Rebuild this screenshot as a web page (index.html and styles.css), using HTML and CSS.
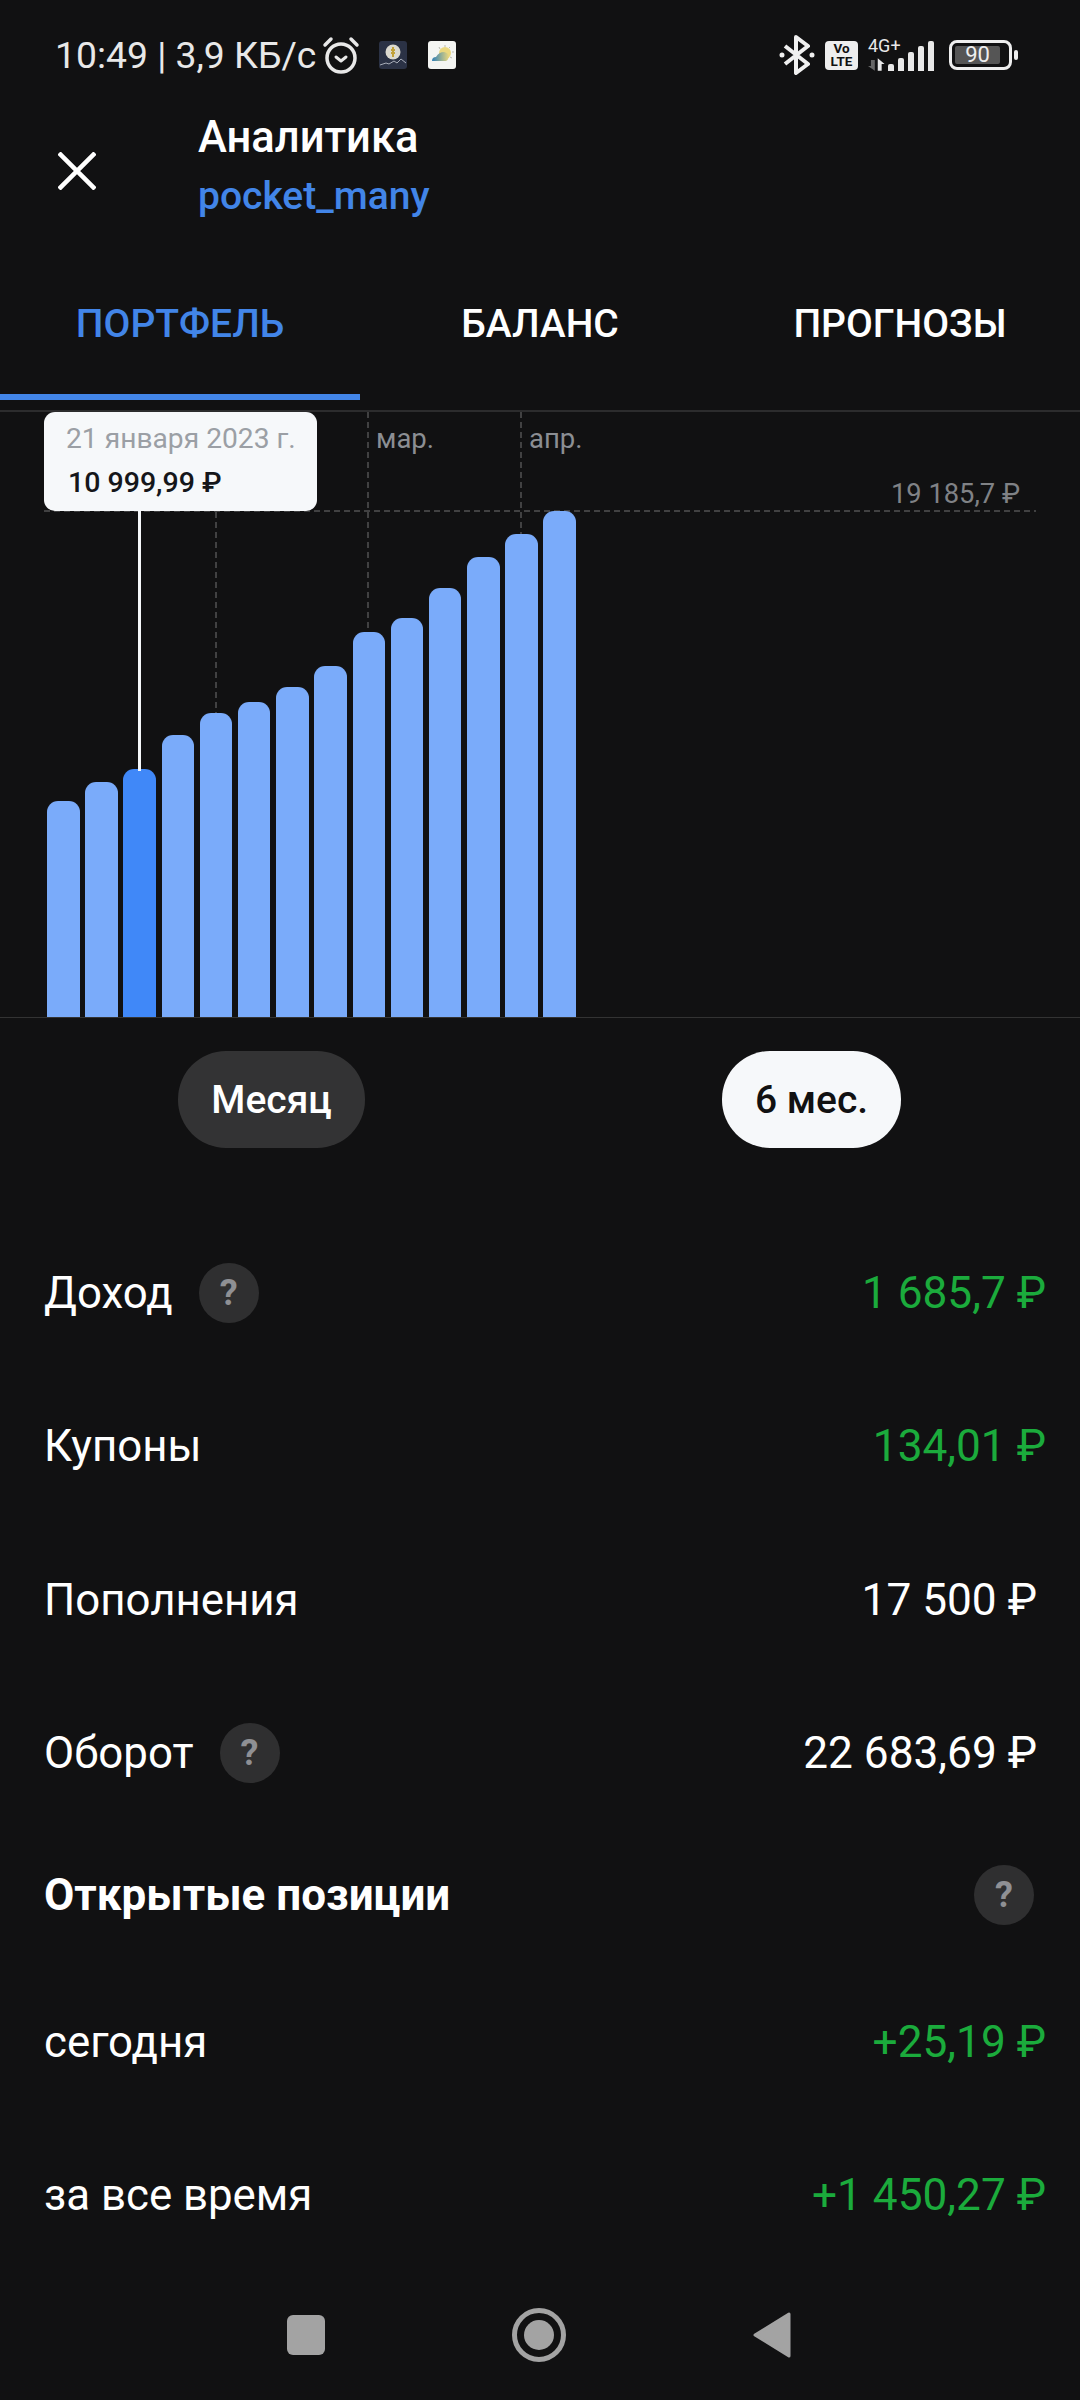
FILE: index.html
```html
<!DOCTYPE html>
<html lang="ru">
<head>
    <meta charset="UTF-8">
    <meta name="viewport" content="width=device-width, initial-scale=1.0">
    <title>Аналитика</title>
    <link rel="stylesheet" href="styles.css">
</head>
<body>
    <div class="status-bar">
        <div class="status-left">
            <span class="status-text">10:49 | 3,9 КБ/с</span>
            <svg class="alarm" width="40" height="38" viewBox="0 0 40 38" fill="none" stroke="#e8e8e8" stroke-linecap="round">
                <circle cx="20" cy="22" r="14" stroke-width="3.5"/>
                <path d="M15 21l5 4 5-4" stroke-width="3" stroke-linejoin="round"/>
                <path d="M4 9l6-6M36 9l-6-6" stroke-width="3.5"/>
            </svg>
            <svg class="app-icon app-icon-first" width="28" height="28" viewBox="0 0 28 28">
                <rect width="28" height="28" rx="3" fill="#2b3245"/>
                <circle cx="14" cy="11" r="7.5" fill="#dcdad0"/>
                <path d="M14 6v10M12 9h4M12 12h4" stroke="#c2a23a" stroke-width="2" fill="none"/>
                <path d="M1 24l6-2 3 1 5-3 3 2 4-4 5 4" fill="none" stroke="#a8adb8" stroke-width="1"/>
            </svg>
            <svg class="app-icon" width="28" height="28" viewBox="0 0 28 28">
                <defs>
                    <linearGradient id="cloud" x1="0" x2="1" y1="0" y2="0">
                        <stop offset="0" stop-color="#2f7fb5"/>
                        <stop offset="1" stop-color="#e9d77e"/>
                    </linearGradient>
                </defs>
                <rect width="28" height="28" rx="3" fill="#f4f5f2"/>
                <path d="M17 4v2M24 11h2M22 6l-1 1M24 17l-2-1M11 6l1 2" stroke="#b9b9b0" stroke-width="1" fill="none"/>
                <circle cx="17" cy="12" r="6" fill="#e9d77e"/>
                <path d="M4 20q0-4 4-4 3-5 8-5 5 1 5 5-1 3-3 4z" fill="url(#cloud)"/>
            </svg>
        </div>
        <div class="status-right">
            <svg width="36" height="40" viewBox="0 0 36 40" fill="none" stroke="#f0f0f0" stroke-width="4" stroke-linejoin="round">
                <path d="M6 11l23 18-12 9V2l12 9L6 29"/>
                <circle cx="3" cy="20" r="1.5" fill="#f0f0f0" stroke-width="2"/>
                <circle cx="33" cy="20" r="1.5" fill="#f0f0f0" stroke-width="2"/>
            </svg>
            <div class="volte"><span>Vo</span><span>LTE</span></div>
            <div class="network">
                <span class="network-type">4G+</span>
                <svg width="17" height="13" viewBox="0 0 17 13">
                    <path d="M0 8h3V2h4v11z" fill="#666"/>
                    <path d="M10 13V0l7 6h-3v7z" fill="#e8e8e8"/>
                </svg>
                <i class="signal-bar signal-1"></i>
                <i class="signal-bar signal-2"></i>
                <i class="signal-bar signal-3"></i>
                <i class="signal-bar signal-4"></i>
                <i class="signal-bar signal-5"></i>
            </div>
            <div class="battery">
                <div class="battery-body"><span class="battery-level">90</span></div>
                <i class="battery-tip"></i>
            </div>
        </div>
    </div>

    <header class="top-bar">
        <svg class="close-icon" width="38" height="38" viewBox="0 0 38 38" stroke="#fff" stroke-width="4.5">
            <path d="M1 1l36 36M37 1L1 37"/>
        </svg>
        <div class="top-titles">
            <h1 class="title">Аналитика</h1>
            <div class="subtitle">pocket_many</div>
        </div>
    </header>

    <nav class="tabs">
        <div class="tab tab-active">ПОРТФЕЛЬ</div>
        <div class="tab">БАЛАНС</div>
        <div class="tab">ПРОГНОЗЫ</div>
    </nav>

    <section class="chart">
        <i class="grid-v grid-v-1"></i>
        <i class="grid-v grid-v-2"></i>
        <i class="grid-v grid-v-3"></i>
        <i class="grid-h"></i>
        <span class="month month-mar">мар.</span>
        <span class="month month-apr">апр.</span>
        <span class="max-value">19 185,7 ₽</span>
        <div class="bars">
            <div class="bar" style="height: 216px"></div>
            <div class="bar" style="height: 235px"></div>
            <div class="bar bar-active" style="height: 248px"></div>
            <div class="bar" style="height: 282px"></div>
            <div class="bar" style="height: 304px"></div>
            <div class="bar" style="height: 315px"></div>
            <div class="bar" style="height: 330px"></div>
            <div class="bar" style="height: 351px"></div>
            <div class="bar" style="height: 385px"></div>
            <div class="bar" style="height: 399px"></div>
            <div class="bar" style="height: 429px"></div>
            <div class="bar" style="height: 460px"></div>
            <div class="bar" style="height: 483px"></div>
            <div class="bar" style="height: 506px"></div>
        </div>
        <i class="cursor"></i>
        <div class="tooltip">
            <div class="tooltip-date">21 января 2023 г.</div>
            <div class="tooltip-value">10 999,99 ₽</div>
        </div>
    </section>

    <div class="periods">
        <button class="pill pill-dark">Месяц</button>
        <button class="pill pill-light">6 мес.</button>
    </div>

    <main class="stats">
        <div class="row">
            <div class="row-label">Доход <span class="help">?</span></div>
            <div class="amount amount-green">1 685,7 ₽</div>
        </div>
        <div class="row">
            <div class="row-label">Купоны</div>
            <div class="amount amount-green">134,01 ₽</div>
        </div>
        <div class="row">
            <div class="row-label">Пополнения</div>
            <div class="amount">17 500 ₽</div>
        </div>
        <div class="row">
            <div class="row-label">Оборот <span class="help">?</span></div>
            <div class="amount">22 683,69 ₽</div>
        </div>
        <div class="row row-heading">
            <h2 class="heading">Открытые позиции</h2>
            <span class="help">?</span>
        </div>
        <div class="row">
            <div class="row-label">сегодня</div>
            <div class="amount amount-green">+25,19 ₽</div>
        </div>
        <div class="row">
            <div class="row-label">за все время</div>
            <div class="amount amount-green">+1 450,27 ₽</div>
        </div>
    </main>

    <footer class="nav-bar">
        <i class="nav-square"></i>
        <svg width="54" height="54" viewBox="0 0 54 54" fill="#a3a3a3">
            <circle cx="27" cy="27" r="24.5" fill="none" stroke="#a3a3a3" stroke-width="5"/>
            <circle cx="27" cy="27" r="15"/>
        </svg>
        <svg width="38" height="46" viewBox="0 0 38 46" fill="#a3a3a3" stroke="#a3a3a3" stroke-width="3" stroke-linejoin="round">
            <path d="M2 23L36 2v42z"/>
        </svg>
    </footer>
</body>
</html>
```

FILE: styles.css
```css
* {
    box-sizing: border-box;
}
body {
    margin: 0;
    width: 1080px;
    height: 2400px;
    overflow: hidden;
    background-color: #111112;
    color: #fff;
    font-family: Roboto, "Noto Sans", sans-serif;
}

/* status bar */
.status-bar {
    height: 110px;
    padding: 0 62px 0 55px;
    display: flex;
    justify-content: space-between;
    align-items: center;
}
.status-left {
    display: flex;
    align-items: center;
}
.status-text {
    font-size: 37.3px;
    color: #e8e8e8;
}
.alarm {
    margin-left: 5px;
}
.app-icon {
    margin-left: 21px;
}
.app-icon-first {
    margin-left: 18px;
}
.status-right {
    display: flex;
    align-items: center;
}
.volte {
    width: 33px;
    height: 29px;
    margin-left: 10px;
    background: #eee;
    border-radius: 4px;
    color: #111;
    font-size: 13.5px;
    font-weight: 700;
    line-height: 13px;
    display: flex;
    flex-direction: column;
    align-items: center;
    justify-content: center;
}
.network {
    position: relative;
    width: 66px;
    height: 32px;
    margin-left: 10px;
    display: flex;
    align-items: flex-end;
}
.network-type {
    position: absolute;
    left: 0;
    top: -2px;
    font-size: 18px;
    line-height: 18px;
    color: #e8e8e8;
}
.signal-bar {
    width: 6.5px;
    margin-left: 3.7px;
    background: #e8e8e8;
    border-radius: 2px 2px 0 0;
}
.network svg + .signal-bar {
    margin-left: 3px;
}
.signal-1 { height: 7px; }
.signal-2 { height: 13px; }
.signal-3 { height: 19px; }
.signal-4 { height: 25px; }
.signal-5 { height: 30px; }
.battery {
    margin-left: 15px;
    display: flex;
    align-items: center;
}
.battery-body {
    width: 63px;
    height: 30px;
    border: 3px solid #eee;
    border-radius: 8px;
    padding: 3px;
}
.battery-level {
    display: block;
    height: 18px;
    width: 45px;
    background: #555;
    border-radius: 2px;
    color: #eee;
    font-size: 22px;
    line-height: 18px;
    text-align: center;
}
.battery-tip {
    width: 4px;
    height: 10px;
    margin-left: 2px;
    background: #eee;
    border-radius: 2px;
}

/* header */
.top-bar {
    height: 120px;
    padding-left: 58px;
    display: flex;
    align-items: center;
}
.close-icon {
    margin-top: 1px;
}
.top-titles {
    margin-left: 102px;
    padding-bottom: 7px;
}
.title {
    margin: 0;
    font-size: 43.5px;
    font-weight: 500;
    line-height: 52px;
}
.subtitle {
    margin-top: 6px;
    font-size: 39px;
    line-height: 52px;
    font-weight: 500;
    color: #4285e8;
}

/* tabs */
.tabs {
    height: 182px;
    display: flex;
    border-bottom: 2px solid #2c2c2d;
}
.tab {
    flex: 1;
    padding-top: 50px;
    font-size: 39px;
    font-weight: 500;
    line-height: 88px;
    text-align: center;
    height: 170px;
}
.tab-active {
    color: #4285e8;
    border-bottom: 6px solid #4285e8;
}

/* chart */
.chart {
    position: relative;
    height: 606px;
    border-bottom: 1px solid #333;
}
.bars {
    position: absolute;
    left: 47px;
    bottom: 0;
    display: flex;
    align-items: flex-end;
    gap: 5.7px;
}
.bar {
    width: 32.5px;
    background: #7aabfa;
    border-radius: 11px 11px 0 0;
}
.bar-active {
    background: #4088f8;
}
.grid-v {
    position: absolute;
    top: 0;
    bottom: 0;
    width: 2px;
    background: repeating-linear-gradient(to bottom, #414142 0 6px, transparent 6px 10px);
}
.grid-v-1 { left: 215px; }
.grid-v-2 { left: 367px; }
.grid-v-3 { left: 520px; }
.grid-h {
    position: absolute;
    left: 44px;
    top: 98px;
    width: 992px;
    height: 2px;
    background: repeating-linear-gradient(to right, #414142 0 6px, transparent 6px 10px);
}
.month {
    position: absolute;
    top: 10px;
    font-size: 27.5px;
    line-height: 34px;
    color: #8b8e93;
}
.month-mar { left: 376px; }
.month-apr { left: 529px; }
.max-value {
    position: absolute;
    top: 65px;
    right: 60px;
    font-size: 27.3px;
    line-height: 34px;
    color: #808286;
}
.cursor {
    position: absolute;
    left: 138px;
    top: 99px;
    width: 3px;
    height: 260px;
    background: #f6f8fa;
}
.tooltip {
    position: absolute;
    left: 44px;
    top: 0;
    width: 273px;
    height: 99px;
    padding: 9px 0 0 22px;
    background: #f6f8fa;
    border-radius: 11px;
}
.tooltip-date {
    font-size: 28.2px;
    line-height: 36px;
    color: #9b9fa5;
}
.tooltip-value {
    margin-top: 8px;
    margin-left: 2px;
    font-size: 28.5px;
    font-weight: 500;
    line-height: 36px;
    color: #15161a;
}

/* period switch */
.periods {
    padding-top: 33px;
    height: 198px;
    display: flex;
    align-items: flex-start;
}
.pill {
    height: 97px;
    border: none;
    border-radius: 48px;
    font-family: inherit;
    font-size: 39px;
    font-weight: 500;
}
.pill-dark {
    width: 187px;
    margin-left: 178px;
    background: #333334;
    color: #fff;
}
.pill-light {
    width: 179px;
    margin-left: 357px;
    background: #f6f8fa;
    color: #111112;
}

/* rows */
.row {
    height: 153.5px;
    padding: 0 34px 0 44px;
    display: flex;
    justify-content: space-between;
    align-items: center;
}
.row-label {
    display: flex;
    align-items: center;
    gap: 26px;
    font-size: 43.8px;
}
.amount {
    font-size: 44.2px;
    padding-right: 9px;
}
.amount-green {
    color: #1bab3c;
    padding-right: 0;
}
.row-heading {
    height: 135px;
    padding-right: 46px;
    padding-bottom: 6px;
}
.heading {
    margin: 0;
    font-size: 44px;
    font-weight: 700;
}
.help {
    width: 60px;
    height: 60px;
    border-radius: 50%;
    background: #2f2f30;
    color: #8f9094;
    font-size: 36px;
    font-weight: 700;
    line-height: 60px;
    text-align: center;
}

/* navigation bar */
.nav-bar {
    height: 54px;
    margin-top: 36px;
    padding-left: 287px;
    display: flex;
    align-items: center;
}
.nav-square {
    width: 38px;
    height: 40px;
    margin-right: 187px;
    background: #a3a3a3;
    border-radius: 6px;
}
.nav-bar svg:last-child {
    margin-left: 187px;
}
```
